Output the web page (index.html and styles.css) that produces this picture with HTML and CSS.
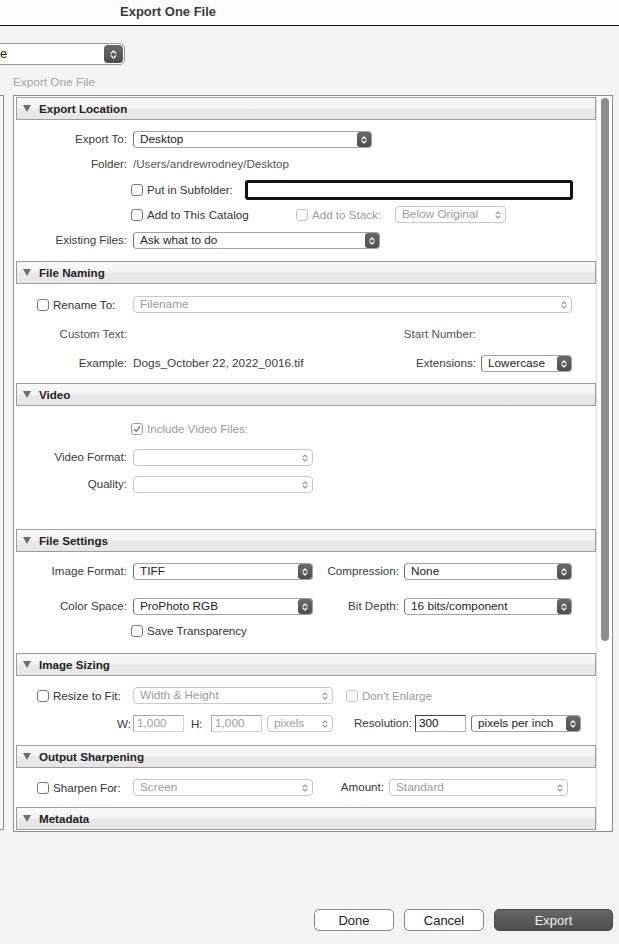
FILE: index.html
```html
<!DOCTYPE html>
<html>
<head>
<meta charset="utf-8">
<title>Export One File</title>
<link rel="stylesheet" href="styles.css">
</head>
<body>
<div class="titlebar"><span class="title">Export One File</span></div>

<div class="preset-row">
  <div class="popup big"><span class="ptext">e</span><span class="stepper dark bigstep"><svg width="7" height="11" viewBox="0 0 7 11"><path d="M1.2 4.2 L3.5 1.9 L5.8 4.2 M1.2 6.8 L3.5 9.1 L5.8 6.8" fill="none" stroke="#fff" stroke-width="1.3" stroke-linecap="round" stroke-linejoin="round"/></svg></span></div>
</div>
<div class="preset-label">Export One File</div>

<div class="main">
  <div class="side"></div>
  <div class="box">
    <div class="scroll">

      <div class="hdr"><svg class="tri" width="8" height="7" viewBox="0 0 8 7"><path d="M0 0H8L4 7Z" fill="#6d6d6d"/></svg><span>Export Location</span></div>
      <div class="body b-loc">
        <div class="row">
          <span class="lbl">Export To:</span>
          <div class="popup w239"><span class="ptext">Desktop</span><span class="stepper dark"><svg width="6" height="10" viewBox="0 0 6 10"><path d="M1 4 L3 2 L5 4 M1 6 L3 8 L5 6" fill="none" stroke="#fff" stroke-width="1.2" stroke-linecap="round" stroke-linejoin="round"/></svg></span></div>
        </div>
        <div class="row mt8">
          <span class="lbl">Folder:</span>
          <span class="val">/Users/andrewrodney/Desktop</span>
        </div>
        <div class="row tall mt7">
          <div class="cb ind w114"><span class="chk"></span><span>Put in Subfolder:</span></div>
          <div class="field thick"></div>
        </div>
        <div class="row mt6">
          <div class="cb ind w165"><span class="chk"></span><span>Add to This Catalog</span></div>
          <div class="cb dis w99"><span class="chk"></span><span>Add to Stack:</span></div>
          <div class="popup dis w111"><span class="ptext">Below Original</span><span class="stepper"><svg width="6" height="10" viewBox="0 0 6 10"><path d="M1 4 L3 2 L5 4 M1 6 L3 8 L5 6" fill="none" stroke="#9a9a9a" stroke-width="1.1" stroke-linecap="round" stroke-linejoin="round"/></svg></span></div>
        </div>
        <div class="row mt9">
          <span class="lbl">Existing Files:</span>
          <div class="popup w247"><span class="ptext">Ask what to do</span><span class="stepper dark"><svg width="6" height="10" viewBox="0 0 6 10"><path d="M1 4 L3 2 L5 4 M1 6 L3 8 L5 6" fill="none" stroke="#fff" stroke-width="1.2" stroke-linecap="round" stroke-linejoin="round"/></svg></span></div>
        </div>
      </div>

      <div class="hdr"><svg class="tri" width="8" height="7" viewBox="0 0 8 7"><path d="M0 0H8L4 7Z" fill="#6d6d6d"/></svg><span>File Naming</span></div>
      <div class="body b-name">
        <div class="row">
          <div class="cb left w96"><span class="chk"></span><span>Rename To:</span></div>
          <div class="popup dis w439"><span class="ptext">Filename</span><span class="stepper"><svg width="6" height="10" viewBox="0 0 6 10"><path d="M1 4 L3 2 L5 4 M1 6 L3 8 L5 6" fill="none" stroke="#9a9a9a" stroke-width="1.1" stroke-linecap="round" stroke-linejoin="round"/></svg></span></div>
        </div>
        <div class="row mt13">
          <span class="lbl soft">Custom Text:</span>
          <span class="lbl2 soft w343">Start Number:</span>
        </div>
        <div class="row mt12">
          <span class="lbl">Example:</span>
          <span class="val dark w270">Dogs_October 22, 2022_0016.tif</span>
          <span class="lbl2 w73 gap5">Extensions:</span>
          <div class="popup w91"><span class="ptext">Lowercase</span><span class="stepper dark"><svg width="6" height="10" viewBox="0 0 6 10"><path d="M1 4 L3 2 L5 4 M1 6 L3 8 L5 6" fill="none" stroke="#fff" stroke-width="1.2" stroke-linecap="round" stroke-linejoin="round"/></svg></span></div>
        </div>
      </div>

      <div class="hdr"><svg class="tri" width="8" height="7" viewBox="0 0 8 7"><path d="M0 0H8L4 7Z" fill="#6d6d6d"/></svg><span>Video</span></div>
      <div class="body b-video">
        <div class="row">
          <div class="cb ind dis"><span class="chk on"><svg width="10" height="10" viewBox="0 0 10 10"><path d="M2.2 5.2 L4.2 7.4 L7.8 2.6" fill="none" stroke="#7d7d7d" stroke-width="1.4" stroke-linecap="round" stroke-linejoin="round"/></svg></span><span>Include Video Files:</span></div>
        </div>
        <div class="row mt12">
          <span class="lbl">Video Format:</span>
          <div class="popup dis w180"><span class="ptext"></span><span class="stepper"><svg width="6" height="10" viewBox="0 0 6 10"><path d="M1 4 L3 2 L5 4 M1 6 L3 8 L5 6" fill="none" stroke="#9a9a9a" stroke-width="1.1" stroke-linecap="round" stroke-linejoin="round"/></svg></span></div>
        </div>
        <div class="row mt10">
          <span class="lbl">Quality:</span>
          <div class="popup dis w180"><span class="ptext"></span><span class="stepper"><svg width="6" height="10" viewBox="0 0 6 10"><path d="M1 4 L3 2 L5 4 M1 6 L3 8 L5 6" fill="none" stroke="#9a9a9a" stroke-width="1.1" stroke-linecap="round" stroke-linejoin="round"/></svg></span></div>
        </div>
      </div>

      <div class="hdr"><svg class="tri" width="8" height="7" viewBox="0 0 8 7"><path d="M0 0H8L4 7Z" fill="#6d6d6d"/></svg><span>File Settings</span></div>
      <div class="body b-file">
        <div class="row">
          <span class="lbl">Image Format:</span>
          <div class="popup w180"><span class="ptext">TIFF</span><span class="stepper dark"><svg width="6" height="10" viewBox="0 0 6 10"><path d="M1 4 L3 2 L5 4 M1 6 L3 8 L5 6" fill="none" stroke="#fff" stroke-width="1.2" stroke-linecap="round" stroke-linejoin="round"/></svg></span></div>
          <span class="lbl2 w86 gap5">Compression:</span>
          <div class="popup w168"><span class="ptext">None</span><span class="stepper dark"><svg width="6" height="10" viewBox="0 0 6 10"><path d="M1 4 L3 2 L5 4 M1 6 L3 8 L5 6" fill="none" stroke="#fff" stroke-width="1.2" stroke-linecap="round" stroke-linejoin="round"/></svg></span></div>
        </div>
        <div class="row mt18">
          <span class="lbl">Color Space:</span>
          <div class="popup w180"><span class="ptext">ProPhoto RGB</span><span class="stepper dark"><svg width="6" height="10" viewBox="0 0 6 10"><path d="M1 4 L3 2 L5 4 M1 6 L3 8 L5 6" fill="none" stroke="#fff" stroke-width="1.2" stroke-linecap="round" stroke-linejoin="round"/></svg></span></div>
          <span class="lbl2 w86 gap5">Bit Depth:</span>
          <div class="popup w168"><span class="ptext">16 bits/component</span><span class="stepper dark"><svg width="6" height="10" viewBox="0 0 6 10"><path d="M1 4 L3 2 L5 4 M1 6 L3 8 L5 6" fill="none" stroke="#fff" stroke-width="1.2" stroke-linecap="round" stroke-linejoin="round"/></svg></span></div>
        </div>
        <div class="row mt7">
          <div class="cb ind"><span class="chk"></span><span>Save Transparency</span></div>
        </div>
      </div>

      <div class="hdr"><svg class="tri" width="8" height="7" viewBox="0 0 8 7"><path d="M0 0H8L4 7Z" fill="#6d6d6d"/></svg><span>Image Sizing</span></div>
      <div class="body b-size">
        <div class="row">
          <div class="cb left w96"><span class="chk"></span><span>Resize to Fit:</span></div>
          <div class="popup dis w200"><span class="ptext">Width &amp; Height</span><span class="stepper"><svg width="6" height="10" viewBox="0 0 6 10"><path d="M1 4 L3 2 L5 4 M1 6 L3 8 L5 6" fill="none" stroke="#9a9a9a" stroke-width="1.1" stroke-linecap="round" stroke-linejoin="round"/></svg></span></div>
          <div class="cb dis ml13"><span class="chk"></span><span>Don't Enlarge</span></div>
        </div>
        <div class="row mt11">
          <span class="lblW">W:</span>
          <div class="field num dis">1,000</div>
          <span class="lblH">H:</span>
          <div class="field num dis">1,000</div>
          <div class="popup dis w66 ml5"><span class="ptext">pixels</span><span class="stepper"><svg width="6" height="10" viewBox="0 0 6 10"><path d="M1 4 L3 2 L5 4 M1 6 L3 8 L5 6" fill="none" stroke="#9a9a9a" stroke-width="1.1" stroke-linecap="round" stroke-linejoin="round"/></svg></span></div>
          <span class="lbl2 w79 gap3">Resolution:</span>
          <div class="field num">300</div>
          <div class="popup w110 ml5"><span class="ptext">pixels per inch</span><span class="stepper dark"><svg width="6" height="10" viewBox="0 0 6 10"><path d="M1 4 L3 2 L5 4 M1 6 L3 8 L5 6" fill="none" stroke="#fff" stroke-width="1.2" stroke-linecap="round" stroke-linejoin="round"/></svg></span></div>
        </div>
      </div>

      <div class="hdr"><svg class="tri" width="8" height="7" viewBox="0 0 8 7"><path d="M0 0H8L4 7Z" fill="#6d6d6d"/></svg><span>Output Sharpening</span></div>
      <div class="body b-sharp">
        <div class="row">
          <div class="cb left w96"><span class="chk"></span><span>Sharpen For:</span></div>
          <div class="popup dis w180"><span class="ptext">Screen</span><span class="stepper"><svg width="6" height="10" viewBox="0 0 6 10"><path d="M1 4 L3 2 L5 4 M1 6 L3 8 L5 6" fill="none" stroke="#9a9a9a" stroke-width="1.1" stroke-linecap="round" stroke-linejoin="round"/></svg></span></div>
          <span class="lbl2 w71 gap5">Amount:</span>
          <div class="popup dis w179"><span class="ptext">Standard</span><span class="stepper"><svg width="6" height="10" viewBox="0 0 6 10"><path d="M1 4 L3 2 L5 4 M1 6 L3 8 L5 6" fill="none" stroke="#9a9a9a" stroke-width="1.1" stroke-linecap="round" stroke-linejoin="round"/></svg></span></div>
        </div>
      </div>

      <div class="hdr"><svg class="tri" width="8" height="7" viewBox="0 0 8 7"><path d="M0 0H8L4 7Z" fill="#6d6d6d"/></svg><span>Metadata</span></div>

    </div>
    <div class="track"><div class="thumb"></div></div>
  </div>
</div>

<div class="buttons">
  <div class="btn">Done</div>
  <div class="btn">Cancel</div>
  <div class="btn primary">Export</div>
</div>
</body>
</html>
```

FILE: styles.css
```css
* { box-sizing: border-box; }

body {
  margin: 0;
  width: 619px;
  height: 944px;
  overflow: hidden;
  background: #f4f4f4;
  font-family: "Liberation Sans", Arial, sans-serif;
  font-size: 11.6px;
  color: #333;
}

.titlebar {
  height: 26px;
  background: #fdfdfd;
  border-bottom: 1px solid #111;
  padding: 0 0 2px 120px;
  display: flex;
  align-items: center;
}
.title { font-weight: bold; font-size: 13px; color: #3a3a3a; }

.preset-row { margin-top: 17px; display: flex; }
.preset-label {
  margin: 9px 0 0 13px;
  line-height: 16px;
  color: #a3a3a3;
  font-size: 11.8px;
}

/* popups */
.popup {
  display: flex;
  align-items: center;
  height: 17px;
  flex: none;
  background: #fff;
  border: 1px solid #a2a2a2;
  border-left-color: #707070;
  border-radius: 4px;
  padding-left: 6px;
  color: #1e1e1e;
  font-size: 11.8px;
  line-height: 14px;
}
.popup.dis { border-color: #c8c8c8; color: #9b9b9b; }
.popup.big {
  height: 22px;
  width: 135px;
  margin-left: -10px;
  padding-left: 9px;
  border-radius: 5px;
  border-color: #9a9a9a;
  font-size: 13px;
}
.ptext { flex: 1; white-space: nowrap; overflow: hidden; padding-bottom: 1px; }
.stepper {
  flex: none;
  width: 14px;
  height: 15px;
  display: flex;
  align-items: center;
  justify-content: center;
}
.stepper.dark {
  background: linear-gradient(#6a6a6a, #4d4d4d);
  border-radius: 3px;
}
.stepper.bigstep { width: 19px; height: 18px; margin-right: 1px; border-radius: 4px; }

.w66 { width: 66px; }
.w91 { width: 91px; }
.w110 { width: 110px; }
.w111 { width: 111px; }
.w168 { width: 168px; }
.w179 { width: 179px; }
.w180 { width: 180px; }
.w200 { width: 200px; }
.w239 { width: 239px; }
.w247 { width: 247px; }
.w439 { width: 439px; }

/* main area */
.main { display: flex; margin-top: 5px; }
.side {
  width: 4px;
  height: 735px;
  border: 1px solid #8c8c8c;
  border-left: none;
  background: #f6f6f6;
}
.box {
  margin-left: 9px;
  width: 600px;
  height: 737px;
  border: 1px solid #8c8c8c;
  background: #fff;
  display: flex;
}
.scroll { width: 582px; padding: 1px 0 0 2px; overflow: hidden; }
.track { width: 16px; border-left: 1px solid #e0e0e0; padding: 2px 0 0 4px; }
.thumb { width: 8px; height: 543px; background: #8e8e8e; border-radius: 4px; }

.hdr {
  height: 23px;
  border: 1px solid #9d9d9d;
  background: linear-gradient(#f9f9f9 0%, #f3f3f3 48%, #e9e9e9 52%, #e6e6e6 100%);
  display: flex;
  align-items: center;
  padding-bottom: 1px;
  font-weight: bold;
  font-size: 11.6px;
  color: #222;
}
.tri { margin-left: 6px; margin-right: 8px; flex: none; }

.body { display: flex; flex-direction: column; }
.b-loc { height: 141px; padding-top: 11px; }
.b-name { height: 99px; padding-top: 12px; }
.b-video { height: 123px; padding-top: 14px; }
.b-file { height: 101px; padding-top: 11px; }
.b-size { height: 69px; padding-top: 11px; }
.b-sharp { height: 39px; padding-top: 11px; }

.row { display: flex; align-items: center; height: 17px; flex: none; white-space: nowrap; line-height: 14px; }
.row.tall { height: 20px; }
.mt6 { margin-top: 6px; }
.mt7 { margin-top: 7px; }
.mt8 { margin-top: 8px; }
.mt9 { margin-top: 9px; }
.mt10 { margin-top: 10px; }
.mt11 { margin-top: 11px; }
.mt12 { margin-top: 12px; }
.mt13 { margin-top: 13px; }
.mt18 { margin-top: 18px; }
.ml5 { margin-left: 5px; }
.ml13 { margin-left: 13px; }

.lbl { width: 111px; margin-right: 6px; text-align: right; flex: none; color: #3a3a3a; padding-bottom: 1px; }
.lbl2 { text-align: right; flex: none; color: #3a3a3a; padding-bottom: 1px; }
.soft { color: #555; }
.gap5 { margin-right: 5px; }
.gap3 { margin-right: 3px; }
.w71 { width: 71px; }
.w73 { width: 73px; }
.w79 { width: 79px; }
.w86 { width: 86px; }
.w343 { width: 343px; }
.val { color: #555; flex: none; padding-bottom: 1px; }
.val.dark { color: #3a3a3a; font-size: 11.8px; }
.w270 { width: 270px; }

/* checkboxes */
.cb { display: flex; align-items: center; gap: 4px; flex: none; color: #333; }
.cb.ind { margin-left: 115px; }
.cb.left { margin-left: 21px; }
.cb.dis { color: #9a9a9a; }
.w96 { width: 96px; }
.w99 { width: 99px; }
.w114 { width: 114px; }
.w165 { width: 165px; }
.chk {
  width: 12px;
  height: 12px;
  border: 1px solid #7b7b7b;
  border-radius: 3px;
  background: #fff;
  flex: none;
  display: flex;
  align-items: center;
  justify-content: center;
}
.cb.dis .chk { border-color: #c2c2c2; }
.cb.dis .chk.on { border-color: #9e9e9e; }

/* text fields */
.field { flex: none; background: #fff; }
.field.thick {
  width: 328px;
  height: 20px;
  border: 3px solid #111;
  border-radius: 3px;
}
.field.num {
  width: 51px;
  height: 17px;
  border: 1px solid #b0b0b0;
  border-top-color: #444;
  border-left-color: #444;
  padding-left: 3px;
  line-height: 14px;
  color: #111;
  font-size: 11.8px;
}
.field.num.dis { border-color: #d4d4d4; border-top-color: #a8a8a8; border-left-color: #a8a8a8; color: #a0a0a0; }
.lblW { width: 115px; margin-right: 2px; text-align: right; flex: none; color: #3a3a3a; }
.lblH { width: 27px; padding-left: 7px; flex: none; color: #3a3a3a; }

/* buttons */
.buttons {
  display: flex;
  justify-content: flex-end;
  gap: 10px;
  padding-right: 6px;
  margin-top: 77px;
}
.btn {
  width: 80px;
  height: 22px;
  border: 1px solid #8a8a8a;
  border-radius: 5px;
  background: #fff;
  font-size: 13px;
  color: #222;
  display: flex;
  align-items: center;
  justify-content: center;
}
.btn.primary {
  width: 119px;
  background: linear-gradient(#666, #4f4f4f);
  border-color: #4a4a4a;
  color: #f0f0f0;
}
```
